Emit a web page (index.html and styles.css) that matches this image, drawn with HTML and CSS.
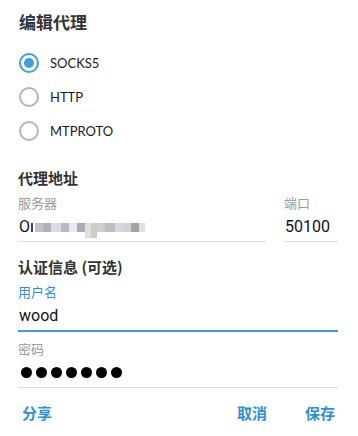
FILE: index.html
```html
<!DOCTYPE html>
<html lang="zh-CN">
<head>
    <meta charset="UTF-8">
    <meta name="viewport" content="width=device-width, initial-scale=1.0">
    <title>编辑代理</title>
    <link rel="stylesheet" href="styles.css">
</head>
<body>
    <div class="dialog">
        <h3 class="title">编辑代理</h3>

        <!-- 代理类型 -->
        <div class="radio-list">
            <label class="radio checked"><span class="dot"></span><span class="radio-text">SOCKS5</span></label>
            <label class="radio"><span class="dot"></span><span class="radio-text">HTTP</span></label>
            <label class="radio"><span class="dot"></span><span class="radio-text">MTPROTO</span></label>
        </div>

        <!-- 代理地址 -->
        <div class="section-title addr-title">代理地址</div>
        <div class="row">
            <div class="field server">
                <div class="field-label">服务器</div>
                <div class="field-value"><span>O</span><span class="mosaic">
                    <i style="width:2px;background:#444"></i><i style="width:2px;background:#ffffff"></i><i style="width:8px;background:#c3c0c8"></i><i style="width:8px;background:#b4b0ba"></i><i style="width:10px;background:#dcdce0"></i><i style="width:8px;background:#bdb8c2"></i><i style="width:8px;background:#e6eaea"></i><i style="width:8px;background:#aeaab5"></i><i class="tall" style="width:6px;background:#dde0dd"></i><i class="tall" style="width:6px;background:#c4d0c8"></i><i style="width:8px;background:#cfccd2"></i><i style="width:10px;background:#c0bcc5"></i><i style="width:8px;background:#d8d6dc"></i><i style="width:8px;background:#ccd6cc"></i><i style="width:8px;background:#a3a1ab"></i><i style="width:6px;background:#e0e0e4"></i>
                </span></div>
            </div>
            <div class="field port">
                <div class="field-label">端口</div>
                <div class="field-value">50100</div>
            </div>
        </div>

        <!-- 认证信息 -->
        <div class="section-title auth-title">认证信息 (可选)</div>
        <div class="field focused">
            <div class="field-label">用户名</div>
            <div class="field-value">wood</div>
        </div>
        <div class="field password">
            <div class="field-label">密码</div>
            <div class="field-value dots"><i></i><i></i><i></i><i></i><i></i><i></i><i></i></div>
        </div>

        <div class="actions">
            <button class="btn">分享</button>
            <div class="right">
                <button class="btn">取消</button>
                <button class="btn">保存</button>
            </div>
        </div>
    </div>
</body>
</html>
```

FILE: styles.css
```css
body {
    margin: 0;
    background: #ffffff;
    font-family: "Noto Sans CJK SC", "Noto Sans", sans-serif;
    color: #222;
}
.dialog {
    padding: 10px 20px 0 18px;
}
.title {
    margin: 0;
    font-size: 17px;
    font-weight: bold;
    color: #333;
    line-height: 24px;
    padding-left: 1px;
}
.radio-list {
    margin-top: 12px;
    margin-left: 1px;
}
.radio {
    display: flex;
    align-items: center;
    height: 34px;
}
.dot {
    width: 16px;
    height: 16px;
    border: 2px solid #b4b4b4;
    border-radius: 50%;
    box-sizing: content-box;
    position: relative;
}
.radio.checked .dot {
    border-color: #3d9fe1;
}
.radio.checked .dot::after {
    content: "";
    position: absolute;
    left: 3px;
    top: 3px;
    width: 10px;
    height: 10px;
    border-radius: 50%;
    background: #3d9fe1;
}
.radio-text {
    margin-left: 11px;
    font-family: Lato, "Noto Sans", sans-serif;
    font-size: 13px;
    color: #1b1b1b;
}
.section-title {
    font-size: 15px;
    font-weight: bold;
    color: #333;
    line-height: 20px;
}
.addr-title {
    margin-top: 20px;
}
.auth-title {
    margin-top: 15px;
}
.row {
    display: flex;
    gap: 18px;
}
.server {
    flex: 1;
}
.port {
    width: 54px;
}
.field {
    border-bottom: 1px solid #dcdcdc;
    padding-top: 6px;
}
.password {
    padding-top: 8px;
}
.field-label {
    font-size: 13px;
    color: #9a9a9a;
    line-height: 18px;
}
.field-value {
    font-family: Roboto, "Noto Sans", sans-serif;
    font-size: 16px;
    color: #111;
    height: 22px;
    margin-top: 3px;
    padding: 0 0 4px 1px;
    display: flex;
    align-items: center;
}
.mosaic {
    display: inline-flex;
    align-items: flex-start;
    height: 9px;
    margin-left: 1px;
    margin-top: 2px;
}
.mosaic i {
    display: block;
    height: 9px;
}
.mosaic i.tall {
    height: 15px;
}
.focused {
    border-bottom: 2px solid #3d9fe1;
}
.focused .field-label {
    color: #2f8fd5;
}
.dots {
    gap: 4px;
    padding-left: 3px;
}
.dots i {
    display: block;
    width: 11px;
    height: 11px;
    border-radius: 50%;
    background: #000;
}
.actions {
    display: flex;
    justify-content: space-between;
    align-items: center;
    margin-top: 15px;
    height: 20px;
}
.right {
    display: flex;
    gap: 31px;
}
.btn {
    border: none;
    background: none;
    padding: 0 3px 0 4px;
    font-family: "Noto Sans CJK SC", sans-serif;
    font-size: 15px;
    line-height: 20px;
    font-weight: bold;
    color: #2f8fd5;
    cursor: pointer;
}
```
